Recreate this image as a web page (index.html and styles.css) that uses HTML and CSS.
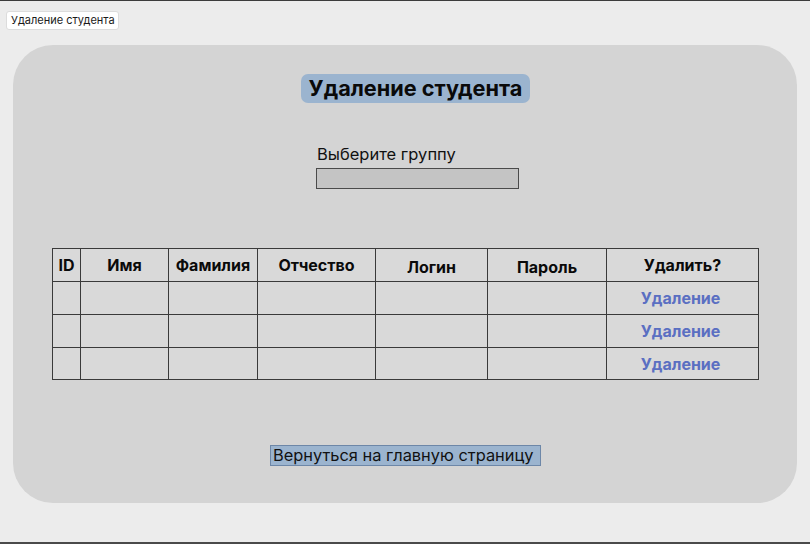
FILE: index.html
```html
<!DOCTYPE html>
<html lang="ru">
<head>
<meta charset="utf-8">
<title>Удаление студента</title>
<link rel="stylesheet" href="styles.css">
</head>
<body>
<div class="tabbar"><span class="tab">Удаление студента</span></div>
<main class="panel">
  <h1 class="title">Удаление студента</h1>
  <label class="label">Выберите группу</label>
  <div class="select"></div>
  <table class="grid">
    <colgroup>
      <col class="c-id"><col class="c-name"><col class="c-fam"><col class="c-otch"><col class="c-login"><col class="c-pass"><col class="c-del">
    </colgroup>
    <thead>
      <tr><th>ID</th><th>Имя</th><th>Фамилия</th><th>Отчество</th><th class="low">Логин</th><th class="low">Пароль</th><th>Удалить?</th></tr>
    </thead>
    <tbody>
      <tr><td></td><td></td><td></td><td></td><td></td><td></td><td class="link">Удаление</td></tr>
      <tr><td></td><td></td><td></td><td></td><td></td><td></td><td class="link">Удаление</td></tr>
      <tr class="last"><td></td><td></td><td></td><td></td><td></td><td></td><td class="link">Удаление</td></tr>
    </tbody>
  </table>
  <div class="back">Вернуться на главную страницу</div>
</main>
</body>
</html>
```
FILE: styles.css
```css
html, body { margin: 0; padding: 0; }
body {
  width: 810px;
  height: 544px;
  box-sizing: border-box;
  background: #ececec;
  border-top: 1px solid #3c3c3c;
  border-bottom: 2px solid #4a4a4a;
  font-family: Inter, "Liberation Sans", sans-serif;
  color: #111;
  overflow: hidden;
}
.tabbar { padding: 7px 0 0 6px; height: 19px; }
.tab {
  display: inline-block;
  box-sizing: border-box;
  height: 19px;
  width: 113px;
  background: #fff;
  border: 1px solid #dcdcdc;
  border-radius: 3px;
  font-size: 11px;
  line-height: 17px;
  padding-left: 4px;
  color: #1a1a1a;
}
.panel {
  margin: 18px 13px 0 13px;
  height: 458px;
  box-sizing: border-box;
  background: #d4d4d4;
  border-radius: 40px;
  padding-top: 29px;
  display: flex;
  flex-direction: column;
  align-items: flex-start;
}
.title {
  margin: 0 0 0 288px;
  box-sizing: border-box;
  width: 229px;
  height: 29px;
  background: #9bb4cf;
  border-radius: 7px;
  font-size: 21.7px;
  font-weight: 700;
  line-height: 29px;
  text-align: center;
  color: #0a0a0a;
}
.label {
  margin: 41px 0 0 304px;
  font-size: 16.5px;
  line-height: 20px;
  color: #111;
}
.select {
  margin: 4px 0 0 303px;
  box-sizing: border-box;
  width: 203px;
  height: 21px;
  background: #c4c4c4;
  border: 1px solid #4a4a4a;
}
.grid {
  margin: 59px 0 0 39px;
  border-collapse: collapse;
  table-layout: fixed;
  width: 707px;
  background: #d9d9d9;
  border: 1px solid #3a3a3a;
}
.c-id { width: 28px; }
.c-name { width: 88px; }
.c-fam { width: 89px; }
.c-otch { width: 118px; }
.c-login { width: 112px; }
.c-pass { width: 119px; }
.c-del { width: 152px; }
.grid th, .grid td {
  border: 1px solid #3a3a3a;
  height: 32px;
  padding: 0;
  text-align: center;
  font-size: 16px;
  font-weight: 700;
}
.grid tr.last td { height: 31px; }
.grid th { color: #0a0a0a; }
.grid th.low { padding-top: 4px; height: 28px; }
.grid td.link { color: #5a6fc2; padding-right: 4px; }
.back {
  margin: 65px 0 0 257px;
  box-sizing: border-box;
  width: 271px;
  height: 21px;
  background: #9bb4cf;
  border: 1px solid #6d87a8;
  font-size: 16.4px;
  line-height: 19px;
  padding-left: 2px;
  color: #111;
}
```
